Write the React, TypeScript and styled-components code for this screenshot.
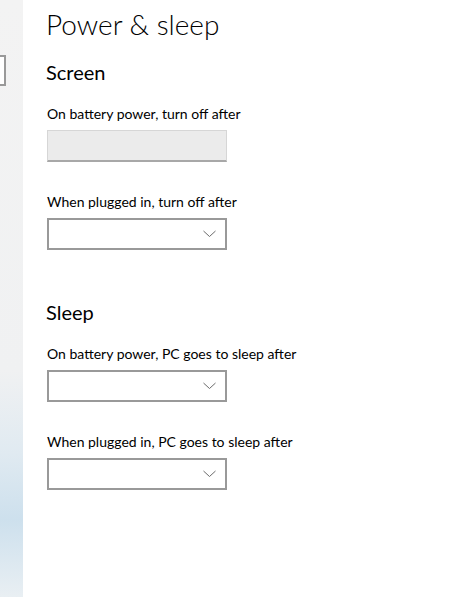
import React from "react";
import styled, { createGlobalStyle } from "styled-components";

const GlobalStyle = createGlobalStyle`
  html, body {
    margin: 0;
    padding: 0;
    background: #ffffff;
  }
  body {
    font-family: "Lato", "Open Sans", sans-serif;
    color: #000000;
  }
`;

const Page = styled.div`
  display: flex;
  width: 475px;
  height: 597px;
  overflow: hidden;
  background: #ffffff;
`;

const Sidebar = styled.aside`
  flex: 0 0 23px;
  height: 100%;
  overflow: hidden;
  padding-top: 55px;
  box-sizing: border-box;
  background: linear-gradient(
    to bottom,
    #f3f3f3 0%,
    #f0f1f2 62%,
    #e0eaf1 76%,
    #cde0ed 87%,
    #e9eff3 100%
  );
`;

const SearchBox = styled.div`
  width: 200px;
  height: 31px;
  margin-left: -194px;
  box-sizing: border-box;
  border: 2px solid #999999;
  background: #ffffff;
`;

const Main = styled.main`
  flex: 1;
  display: flex;
  flex-direction: column;
  padding: 4px 0 0 23px;
`;

const Title = styled.h1`
  margin: 0;
  font-size: 28px;
  font-weight: 300;
  line-height: 40px;
`;

const Section = styled.section<{ $gap: number }>`
  display: flex;
  flex-direction: column;
  margin-top: ${({ $gap }) => $gap}px;
`;

const Heading = styled.h2`
  margin: 0 0 18px;
  font-size: 20px;
  font-weight: 400;
  line-height: 28px;
`;

const Field = styled.div`
  display: flex;
  flex-direction: column;
  margin-bottom: 30px;
`;

const Label = styled.label`
  margin: 0 0 6px 1px;
  font-size: 14px;
  line-height: 20px;
`;

const Select = styled.div<{ $disabled?: boolean }>`
  display: flex;
  align-items: center;
  justify-content: flex-end;
  width: 180px;
  height: 32px;
  margin-left: 1px;
  box-sizing: border-box;
  padding-right: 9px;
  background: ${({ $disabled }) => ($disabled ? "#ebebeb" : "#ffffff")};
  border: ${({ $disabled }) =>
    $disabled ? "1px solid #d6d6d6" : "2px solid #999999"};
  border-bottom: 2px solid
    ${({ $disabled }) => ($disabled ? "#a8a8a8" : "#999999")};
`;

const Chevron = () => (
  <svg width="13" height="8" viewBox="0 0 13 8">
    <polyline
      points="0.5,1 6.5,6.5 12.5,1"
      fill="none"
      stroke="#6b6b6b"
      strokeWidth="1"
    />
  </svg>
);

type Setting = { label: string; disabled?: boolean };

const screen: Setting[] = [
  { label: "On battery power, turn off after", disabled: true },
  { label: "When plugged in, turn off after" },
];

const sleep: Setting[] = [
  { label: "On battery power, PC goes to sleep after" },
  { label: "When plugged in, PC goes to sleep after" },
];

const Dropdown = ({ label, disabled }: Setting) => (
  <Field>
    <Label>{label}</Label>
    <Select $disabled={disabled}>{!disabled && <Chevron />}</Select>
  </Field>
);

const App = () => (
  <>
    <GlobalStyle />
    <Page>
      <Sidebar>
        <SearchBox />
      </Sidebar>
      <Main>
        <Title>Power &amp; sleep</Title>
        <Section $gap={14}>
          <Heading>Screen</Heading>
          {screen.map((s) => (
            <Dropdown key={s.label} {...s} />
          ))}
        </Section>
        <Section $gap={18}>
          <Heading>Sleep</Heading>
          {sleep.map((s) => (
            <Dropdown key={s.label} {...s} />
          ))}
        </Section>
      </Main>
    </Page>
  </>
);

export default App;
